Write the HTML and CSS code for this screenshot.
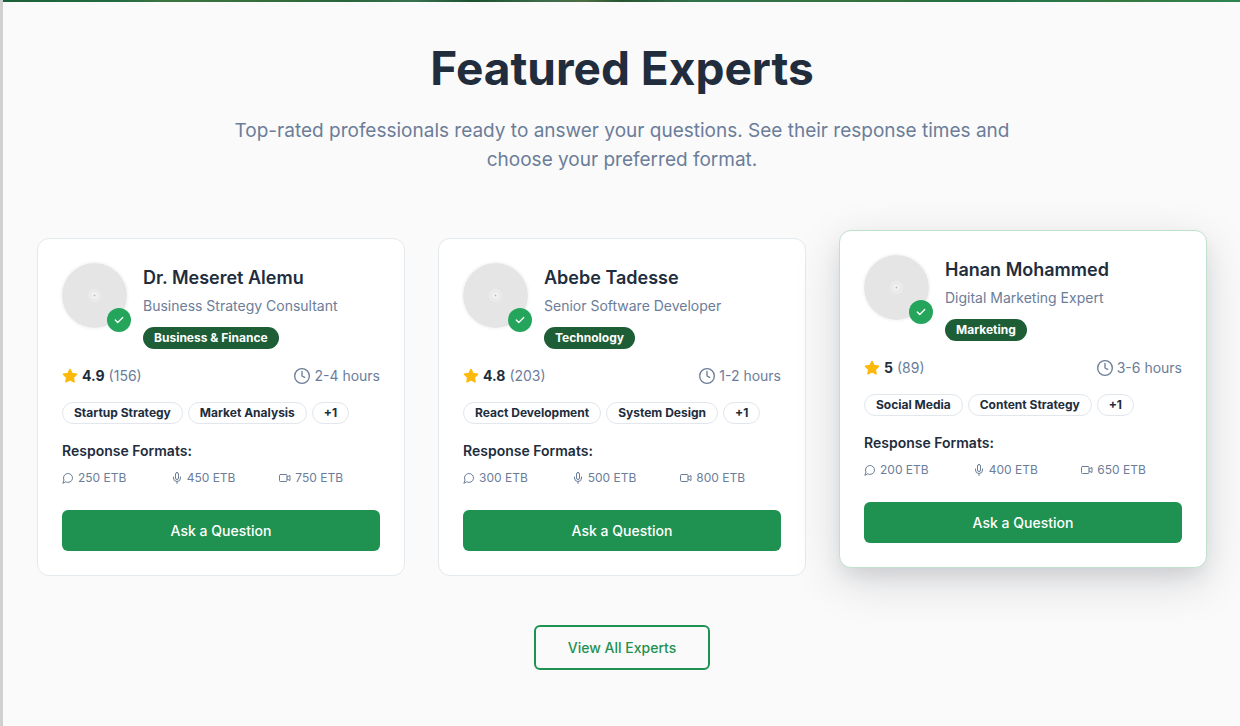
FILE: index.html
```html
<!DOCTYPE html>
<html lang="en">
<head>
<meta charset="utf-8">
<meta name="viewport" content="width=device-width, initial-scale=1">
<title>Featured Experts</title>
<link rel="stylesheet" href="styles.css">
</head>
<body>
<svg class="sprite" aria-hidden="true">
  <symbol id="star" viewBox="0 0 24 24"><path fill="currentColor" stroke="currentColor" stroke-width="2" stroke-linejoin="round" d="M12 2l3.09 6.26L22 9.27l-5 4.87 1.18 6.88L12 17.77l-6.18 3.25L7 14.14 2 9.27l6.91-1.01z"/></symbol>
  <symbol id="clock" viewBox="0 0 24 24"><circle cx="12" cy="12" r="11"/><path d="M12 5v7l4 2"/></symbol>
  <symbol id="chat" viewBox="0 0 24 24"><path d="M7.9 20A9 9 0 1 0 4 16.1L2 22Z"/></symbol>
  <symbol id="mic" viewBox="0 0 24 24"><path d="M12 1a3 3 0 0 0-3 3v8a3 3 0 0 0 6 0V4a3 3 0 0 0-3-3Z"/><path d="M19 10v2a7 7 0 0 1-14 0v-2M12 19v4"/></symbol>
  <symbol id="video" viewBox="0 0 24 24"><rect x="1" y="5" width="15" height="14" rx="2"/><path d="M16 10l6-3v10l-6-3"/></symbol>
  <symbol id="check" viewBox="0 0 24 24"><path d="M21 6L9 18l-6-6"/></symbol>
  <symbol id="portrait" viewBox="0 0 66 66"><circle cx="33" cy="33" r="33" fill="#e5e5e5"/><circle cx="33" cy="33" r="7" fill="#eaeaea"/><circle cx="33" cy="33" r="3" fill="#f3f3f3"/><circle cx="33" cy="33" r="1" fill="#bdbdbd"/></symbol>
</svg>
<div class="hero-edge"></div>
<main class="experts">
  <header class="intro">
    <h1 class="intro-title">Featured Experts</h1>
    <p class="intro-text">Top-rated professionals ready to answer your questions. See their response times and choose your preferred format.</p>
  </header>
  <div class="grid">
    <article class="card">
      <div class="profile">
        <div class="avatar"><svg class="portrait"><use href="#portrait"/></svg><span class="verified"><svg class="icon icon-check"><use href="#check"/></svg></span></div>
        <div class="about"><h2 class="name">Dr. Meseret Alemu</h2><p class="role">Business Strategy Consultant</p><span class="field">Business &amp; Finance</span></div>
      </div>
      <div class="stats">
        <div class="rating"><svg class="icon icon-star"><use href="#star"/></svg><strong class="score">4.9</strong><span>(156)</span></div>
        <div class="time"><svg class="icon"><use href="#clock"/></svg><span>2-4 hours</span></div>
      </div>
      <ul class="tags"><li class="tag">Startup Strategy</li><li class="tag">Market Analysis</li><li class="tag">+1</li></ul>
      <h3 class="label">Response Formats:</h3>
      <ul class="prices"><li class="price"><svg class="icon icon-small"><use href="#chat"/></svg>250 ETB</li><li class="price"><svg class="icon icon-small"><use href="#mic"/></svg>450 ETB</li><li class="price"><svg class="icon icon-small"><use href="#video"/></svg>750 ETB</li></ul>
      <button class="ask" type="button">Ask a Question</button>
    </article>
    <article class="card">
      <div class="profile">
        <div class="avatar"><svg class="portrait"><use href="#portrait"/></svg><span class="verified"><svg class="icon icon-check"><use href="#check"/></svg></span></div>
        <div class="about"><h2 class="name">Abebe Tadesse</h2><p class="role">Senior Software Developer</p><span class="field">Technology</span></div>
      </div>
      <div class="stats">
        <div class="rating"><svg class="icon icon-star"><use href="#star"/></svg><strong class="score">4.8</strong><span>(203)</span></div>
        <div class="time"><svg class="icon"><use href="#clock"/></svg><span>1-2 hours</span></div>
      </div>
      <ul class="tags"><li class="tag">React Development</li><li class="tag">System Design</li><li class="tag">+1</li></ul>
      <h3 class="label">Response Formats:</h3>
      <ul class="prices"><li class="price"><svg class="icon icon-small"><use href="#chat"/></svg>300 ETB</li><li class="price"><svg class="icon icon-small"><use href="#mic"/></svg>500 ETB</li><li class="price"><svg class="icon icon-small"><use href="#video"/></svg>800 ETB</li></ul>
      <button class="ask" type="button">Ask a Question</button>
    </article>
    <article class="card card-raised">
      <div class="profile">
        <div class="avatar"><svg class="portrait"><use href="#portrait"/></svg><span class="verified"><svg class="icon icon-check"><use href="#check"/></svg></span></div>
        <div class="about"><h2 class="name">Hanan Mohammed</h2><p class="role">Digital Marketing Expert</p><span class="field">Marketing</span></div>
      </div>
      <div class="stats">
        <div class="rating"><svg class="icon icon-star"><use href="#star"/></svg><strong class="score">5</strong><span>(89)</span></div>
        <div class="time"><svg class="icon"><use href="#clock"/></svg><span>3-6 hours</span></div>
      </div>
      <ul class="tags"><li class="tag">Social Media</li><li class="tag">Content Strategy</li><li class="tag">+1</li></ul>
      <h3 class="label">Response Formats:</h3>
      <ul class="prices"><li class="price"><svg class="icon icon-small"><use href="#chat"/></svg>200 ETB</li><li class="price"><svg class="icon icon-small"><use href="#mic"/></svg>400 ETB</li><li class="price"><svg class="icon icon-small"><use href="#video"/></svg>650 ETB</li></ul>
      <button class="ask" type="button">Ask a Question</button>
    </article>
  </div>
  <div class="more"><button class="view-all" type="button">View All Experts</button></div>
</main>
</body>
</html>
```

FILE: styles.css
```css
* { box-sizing: border-box; margin: 0; padding: 0; }
body {
  min-height: 100vh;
  border-left: 3px solid #d0d0d0;
  background: #fafafa;
  color: #212d3d;
  font-family: Inter, "Liberation Sans", sans-serif;
}
ul { list-style: none; }
button { font-family: inherit; cursor: pointer; }
.sprite { display: none; }
.hero-edge {
  height: 2px;
  background: linear-gradient(90deg, #1c6038, #206b43 9%, #3c7440 13%, #356f3b 20%, #29653c 28%, #37714f 33%, #1c5130 38%, #3c6c4c 44%, #4e6c40 47%, #285532 50%, #31724c 56%, #35713c 70%, #217044 79%, #28764a 84%, #35783f 90%, #2d8450);
}
.experts { padding: 36px 33px 56px 34px; }
.intro { max-width: 800px; margin: 0 auto 64px; text-align: center; }
.intro-title { font-size: 46px; line-height: 60px; font-weight: 700; }
.intro-text { margin-top: 18px; color: #6b7d99; font-size: 19px; line-height: 29px; }
.grid { display: grid; grid-template-columns: repeat(3, 1fr); gap: 33px; }
.card {
  padding: 24px;
  border: 1px solid #e3e9ec;
  border-radius: 12px;
  background: #fff;
}
.card-raised {
  transform: translateY(-8px);
  border-color: #bfe0cc;
  box-shadow: 0 14px 48px rgba(15, 23, 42, .14), 0 10px 20px -4px rgba(15, 23, 42, .1);
}
.profile { display: flex; gap: 16px; }
.avatar { position: relative; flex: none; width: 65px; height: 65px; border-radius: 50%; box-shadow: 0 0 0 2px #f9f9f9; }
.portrait { display: block; width: 65px; height: 65px; }
.verified {
  position: absolute;
  right: -4px;
  bottom: -4px;
  display: grid;
  place-items: center;
  width: 24px;
  height: 24px;
  border-radius: 50%;
  background: #25a55b;
  color: #fff;
}
.icon { flex: none; width: 16px; height: 16px; fill: none; stroke: currentColor; stroke-width: 2; stroke-linecap: round; stroke-linejoin: round; }
.icon-check { width: 10px; height: 10px; stroke-width: 3; }
.icon-small { width: 12px; height: 12px; }
.icon-star { color: #fbb90b; }
.name { font-size: 18px; line-height: 30px; font-weight: 600; }
.role { margin-top: 2px; color: #6b7d99; font-size: 14px; line-height: 22px; }
.field {
  display: block;
  width: fit-content;
  margin-top: 10px;
  padding: 0 11px;
  border-radius: 11px;
  background: #1e5e36;
  color: #fff;
  font-size: 12px;
  line-height: 22px;
  font-weight: 700;
}
.stats { display: flex; justify-content: space-between; margin-top: 16px; color: #6b7d99; font-size: 14px; line-height: 22px; }
.rating, .time { display: flex; align-items: center; gap: 4px; }
.score { color: #212d3d; font-weight: 700; }
.tags { display: flex; flex-wrap: wrap; gap: 5px; margin-top: 15px; }
.tag { padding: 0 11px; border: 1px solid #e1e7ec; border-radius: 11px; font-size: 12px; line-height: 20px; font-weight: 700; }
.label { margin-top: 16px; font-size: 14px; line-height: 22px; font-weight: 600; }
.prices { display: grid; grid-template-columns: repeat(3, 1fr); gap: 8px; margin-top: 6px; }
.price { display: flex; align-items: center; gap: 4px; color: #6b7d99; font-size: 12px; line-height: 20px; }
.ask {
  display: block;
  width: 100%;
  margin-top: 22px;
  padding: 10px;
  border: 0;
  border-radius: 6px;
  background: #1f9150;
  color: #fff;
  font-size: 14px;
  line-height: 21px;
  font-weight: 500;
}
.more { margin-top: 49px; text-align: center; }
.view-all {
  padding: 10px 32px;
  border: 2px solid #1f9150;
  border-radius: 6px;
  background: #fafafa;
  color: #1f9150;
  font-size: 14px;
  line-height: 21px;
  font-weight: 500;
}
@media (max-width: 900px) {
  .grid { grid-template-columns: 1fr; }
}
```
